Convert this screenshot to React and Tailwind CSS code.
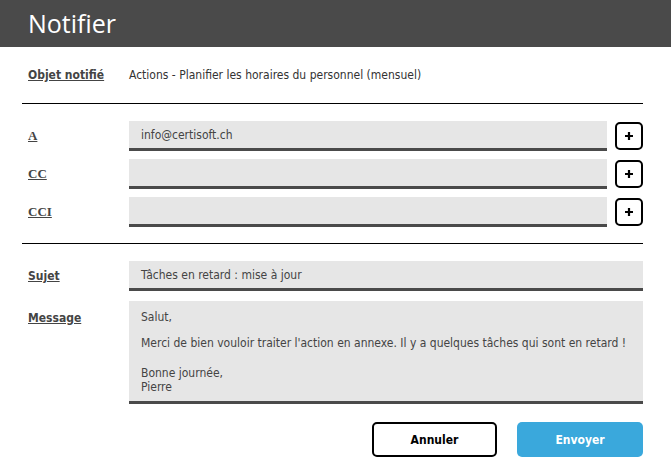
import { useState } from "react";

const Label = ({ children, serif }) => (
  <span
    className={
      "inline-block w-[101px] shrink-0 font-bold underline text-[12px] text-[#444] " +
      (serif ? "font-['Liberation_Serif',serif] text-[13px]" : "")
    }
  >
    {children}
  </span>
);

const PlusButton = () => (
  <button
    type="button"
    className="ml-2 flex h-[28px] w-[28px] shrink-0 items-center justify-center rounded-[5px] border-2 border-black bg-white"
  >
    <svg width="10" height="10" viewBox="0 0 10 10">
      <path d="M5 1v8M1 5h8" stroke="#000" strokeWidth="2.2" />
    </svg>
  </button>
);

const RecipientRow = ({ label, value }) => (
  <div className="flex items-center">
    <Label serif>{label}</Label>
    <div className="flex h-[30px] flex-1 items-center border-b-[3px] border-[#4a4a4a] bg-[#e6e6e6] px-[12px] text-[12px] text-[#444]">
      {value}
    </div>
    <PlusButton />
  </div>
);

export default function App() {
  const [subject] = useState("Tâches en retard : mise à jour");

  return (
    <div className="h-[475px] w-[671px] bg-white font-['DejaVu_Sans_Condensed','DejaVu_Sans',sans-serif] text-[12px]">
      <header className="flex h-[47px] items-center bg-[#4a4a4a] px-[28px]">
        <h1 className="font-['Open_Sans',sans-serif] text-[25px] font-normal text-white">Notifier</h1>
      </header>

      <div className="px-[22px] pr-[28px]">
        <div className="flex items-center px-[6px] pt-[19px] pb-[19px]">
          <Label>Objet notifié</Label>
          <span className="text-[#333]">Actions - Planifier les horaires du personnel (mensuel)</span>
        </div>
        <hr className="border-t border-black" />

        <div className="flex flex-col gap-[8px] px-[6px] pr-0 pt-[17px] pb-[16px]">
          <RecipientRow label="A" value="info@certisoft.ch" />
          <RecipientRow label="CC" />
          <RecipientRow label="CCI" />
        </div>
        <hr className="border-t border-black" />

        <div className="flex flex-col gap-[10px] px-[6px] pr-0 pt-[17px]">
          <div className="flex items-center">
            <Label>Sujet</Label>
            <div className="flex h-[30px] flex-1 items-center border-b-[3px] border-[#4a4a4a] bg-[#e6e6e6] px-[12px] text-[#444]">
              {subject}
            </div>
          </div>
          <div className="flex items-start">
            <div className="w-[101px] shrink-0 pt-[8px]">
              <Label>Message</Label>
            </div>
            <div className="flex h-[103px] flex-1 flex-col border-b-[3px] border-[#4a4a4a] bg-[#e6e6e6] px-[12px] pt-[9px] leading-[14px] text-[#444]">
              <p>Salut,</p>
              <p className="mt-[12px]">Merci de bien vouloir traiter l'action en annexe. Il y a quelques tâches qui sont en retard !</p>
              <p className="mt-[16px]">
                Bonne journée,
                <br />
                Pierre
              </p>
            </div>
          </div>
        </div>

        <div className="flex justify-end gap-[20px] pt-[18px]">
          <button
            type="button"
            className="h-[35px] w-[125px] rounded-[5px] border-2 border-black bg-white font-bold text-black"
          >
            Annuler
          </button>
          <button
            type="button"
            className="h-[35px] w-[126px] rounded-[5px] bg-[#3aa8dc] font-bold text-white"
          >
            Envoyer
          </button>
        </div>
      </div>
    </div>
  );
}
